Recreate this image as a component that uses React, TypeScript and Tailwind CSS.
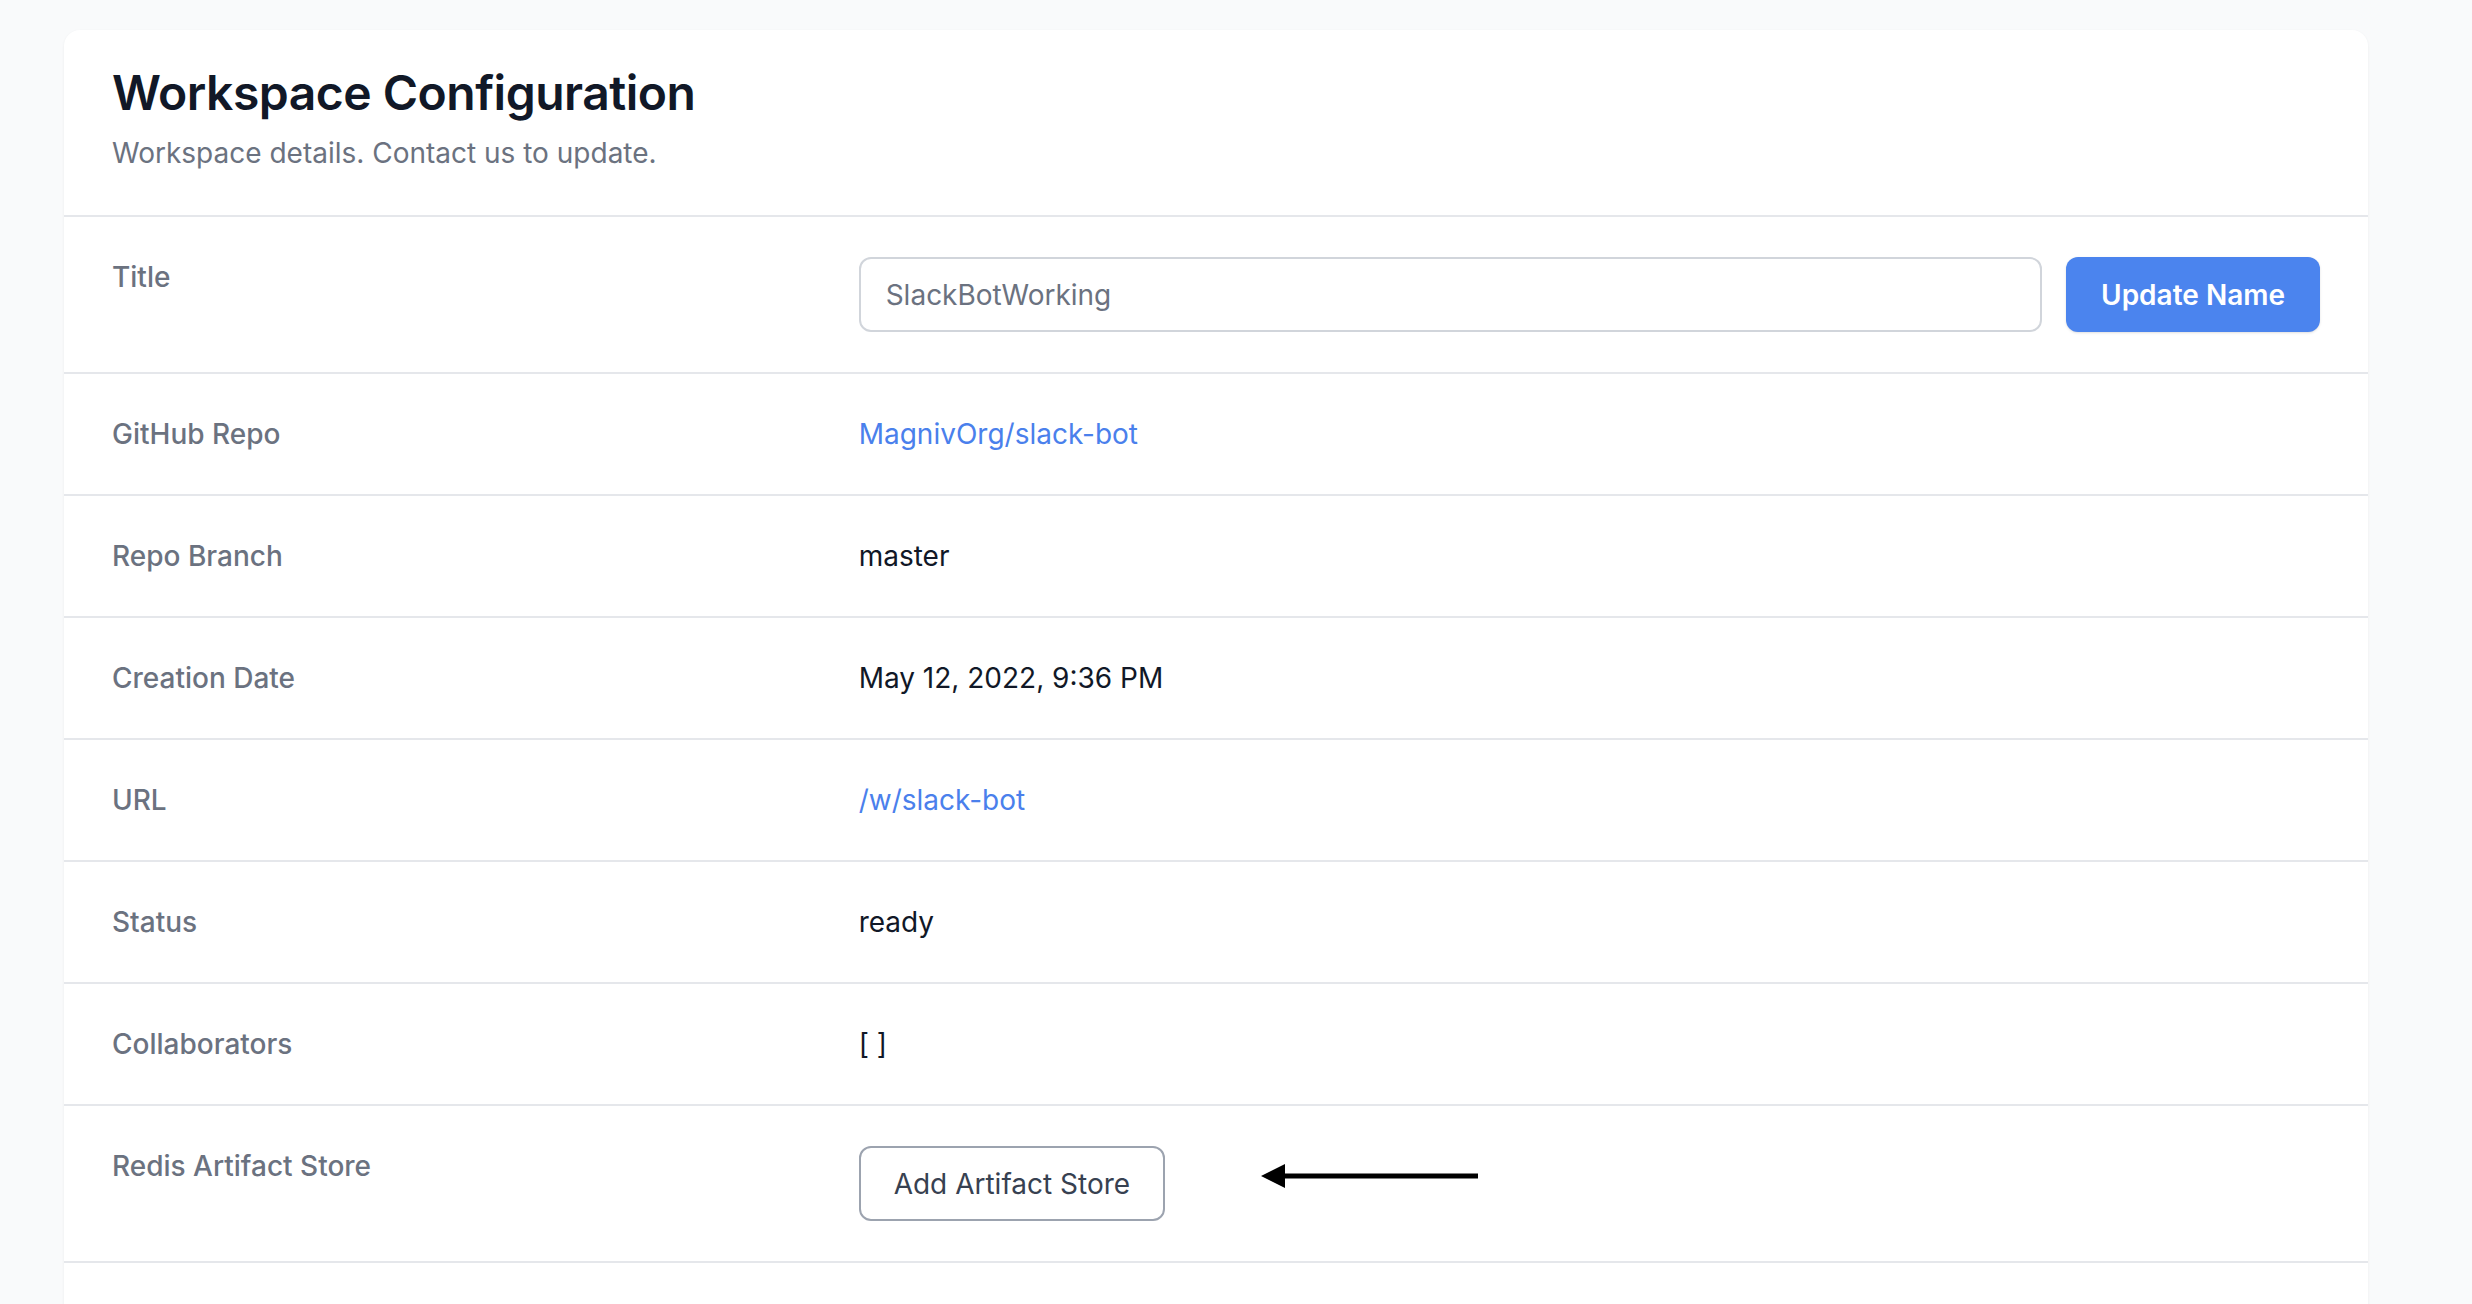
import React from 'react'

const FONT = { fontFamily: 'Inter, "Noto Sans", sans-serif' }

type Row = { label: string; value: React.ReactNode }

const rows: Row[] = [
  { label: 'GitHub Repo', value: <a href="#" className="text-[#4a80ec]">MagnivOrg/slack-bot</a> },
  { label: 'Repo Branch', value: 'master' },
  { label: 'Creation Date', value: 'May 12, 2022, 9:36 PM' },
  { label: 'URL', value: <a href="#" className="text-[#4a80ec]">/w/slack-bot</a> },
  { label: 'Status', value: 'ready' },
  { label: 'Collaborators', value: '[ ]' },
]

function ArrowLeft() {
  return (
    <svg width="217" height="24" viewBox="0 0 217 24" className="mt-[18px] ml-[96px] shrink-0">
      <polygon points="0,12 24,0 24,24" fill="#000" />
      <rect x="22" y="9.5" width="195" height="5" fill="#000" />
    </svg>
  )
}

export default function App() {
  return (
    <div className="min-h-screen bg-[#f9fafb] pl-[64px] pt-[30px]" style={FONT}>
      <div className="w-[2304px] bg-white rounded-2xl shadow-[0_1px_3px_rgba(0,0,0,0.06)] overflow-hidden">
        <div className="px-[48px] pt-[31px] pb-[42px]">
          <h1 className="text-[48px] leading-[64px] font-semibold tracking-[-0.5px] text-[#111827]">Workspace Configuration</h1>
          <p className="mt-[8px] text-[28px] leading-[40px] text-[#6b7280]">Workspace details. Contact us to update.</p>
        </div>

        <dl>
          <div className="grid grid-cols-3 gap-[32px] px-[48px] py-[40px] border-t-2 border-[#e5e7eb]">
            <dt className="text-[28px] leading-[40px] font-medium text-[#6b7280]">Title</dt>
            <dd className="col-span-2 flex gap-[24px]">
              <input
                defaultValue="SlackBotWorking"
                className="flex-1 h-[75px] px-[25px] text-[28px] text-[#6b7280] border-2 border-[#d1d5db] rounded-xl outline-none"
              />
              <button className="h-[75px] px-[35px] rounded-xl bg-[#4b84ee] text-white text-[28px] font-semibold shadow-sm">
                Update Name
              </button>
            </dd>
          </div>

          {rows.map((r) => (
            <div key={r.label} className="grid grid-cols-3 gap-[32px] px-[48px] py-[40px] border-t-2 border-[#e5e7eb]">
              <dt className="text-[28px] leading-[40px] font-medium text-[#6b7280]">{r.label}</dt>
              <dd className="col-span-2 text-[28px] leading-[40px] text-[#111827]">{r.value}</dd>
            </div>
          ))}

          <div className="grid grid-cols-3 gap-[32px] px-[48px] py-[40px] border-t-2 border-[#e5e7eb]">
            <dt className="text-[28px] leading-[40px] font-medium text-[#6b7280]">Redis Artifact Store</dt>
            <dd className="col-span-2 flex items-start">
              <button className="h-[75px] px-[33px] rounded-xl border-2 border-[#9ca3af] bg-white text-[28px] text-[#374151]">
                Add Artifact Store
              </button>
              <ArrowLeft />
            </dd>
          </div>

          <div className="h-[160px] border-t-2 border-[#e5e7eb]" />
        </dl>
      </div>
    </div>
  )
}
